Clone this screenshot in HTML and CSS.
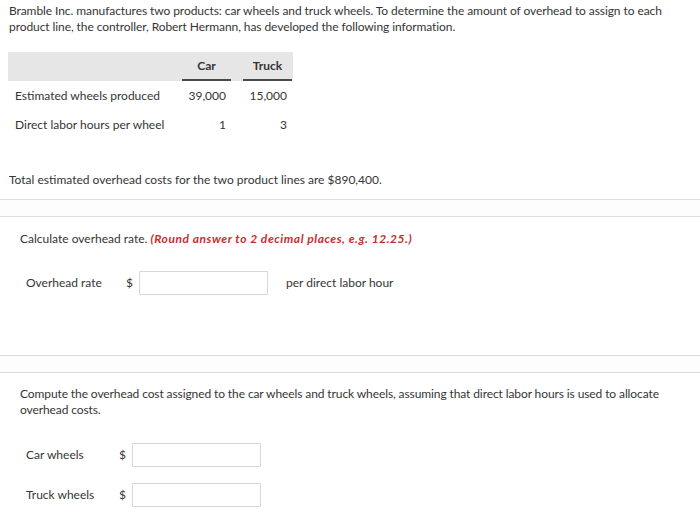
FILE: index.html
```html
<!DOCTYPE html>
<html>
<head>
<meta charset="utf-8">
<link rel="stylesheet" href="styles.css">
</head>
<body>
<div class="page">
  <p class="intro">Bramble Inc. manufactures two products: car wheels and truck wheels. To determine the amount of overhead to assign to each product line, the controller, Robert Hermann, has developed the following information.</p>

  <div class="data">
    <div class="row head">
      <div class="label"></div>
      <div class="col"><span>Car</span></div>
      <div class="col"><span>Truck</span></div>
    </div>
    <div class="row">
      <div class="label">Estimated wheels produced</div>
      <div class="num">39,000</div>
      <div class="num">15,000</div>
    </div>
    <div class="row">
      <div class="label">Direct labor hours per wheel</div>
      <div class="num">1</div>
      <div class="num">3</div>
    </div>
  </div>

  <p class="note">Total estimated overhead costs for the two product lines are $890,400.</p>

  <div class="divider"></div>

  <div class="section s1">
    <p class="question">Calculate overhead rate. <em class="hint">(Round answer to 2 decimal places, e.g. 12.25.)</em></p>
    <div class="field rate">
      <span class="flabel">Overhead rate</span>
      <span class="dollar">$</span>
      <span class="box"></span>
      <span class="unit">per direct labor hour</span>
    </div>
  </div>

  <div class="divider d2"></div>

  <div class="section s2">
    <p class="question">Compute the overhead cost assigned to the car wheels and truck wheels, assuming that direct labor hours is used to allocate overhead costs.</p>
    <div class="field wheels">
      <span class="flabel">Car wheels</span>
      <span class="dollar">$</span>
      <span class="box"></span>
    </div>
    <div class="field wheels second">
      <span class="flabel">Truck wheels</span>
      <span class="dollar">$</span>
      <span class="box"></span>
    </div>
  </div>
</div>
</body>
</html>
```

FILE: styles.css
```css
html, body {
  margin: 0;
  padding: 0;
  background: #ffffff;
}

body {
  font-family: Lato, "Open Sans", "Liberation Sans", sans-serif;
  font-size: 12px;
  line-height: 16px;
  color: #353535;
}

p {
  margin: 0;
}

.intro {
  padding: 3px 20px 0 9px;
  letter-spacing: -0.08px;
}

.data {
  margin: 17px 0 0 8px;
  width: 285px;
}

.row {
  display: grid;
  grid-template-columns: 162px 49px 49px;
  column-gap: 12px;
  height: 29px;
  align-items: center;
}

.row.head {
  background: #e6e6e6;
  height: 29px;
  align-items: stretch;
}

.row.head .col {
  border-bottom: 2px solid #4a4a4a;
  display: flex;
  align-items: center;
  justify-content: center;
}

.row.head .col span {
  font-weight: 700;
  padding-top: 1px;
}

.label {
  padding-left: 7px;
}

.num {
  text-align: right;
  padding-right: 5px;
}

.note {
  margin-top: 33px;
  padding-left: 9px;
}

.divider {
  margin-top: 11px;
  height: 16px;
  border-top: 1px solid #dcdcdc;
  border-bottom: 1px solid #dcdcdc;
  background: #fdfdfd;
}

.d2 {
  margin-top: 60px;
}

.section {
  padding-left: 20px;
}

.s1 {
  padding-top: 14px;
}

.s2 {
  padding-top: 13px;
  padding-right: 20px;
}

.s2 .question {
  letter-spacing: -0.1px;
}

.hint {
  color: #c62e2e;
  font-weight: 700;
  font-style: italic;
  letter-spacing: 0.55px;
}

.field {
  display: flex;
  align-items: center;
  padding-left: 6px;
}

.rate {
  margin-top: 24px;
}

.rate .flabel {
  width: 100px;
}

.wheels {
  margin-top: 25px;
}

.wheels.second {
  margin-top: 16px;
}

.wheels .flabel {
  width: 93px;
}

.dollar {
  width: 13px;
}

.box {
  display: block;
  width: 127px;
  height: 22px;
  border: 1px solid #d6d6d6;
  border-radius: 1px;
  background: #fff;
}

.unit {
  margin-left: 18px;
}
```
